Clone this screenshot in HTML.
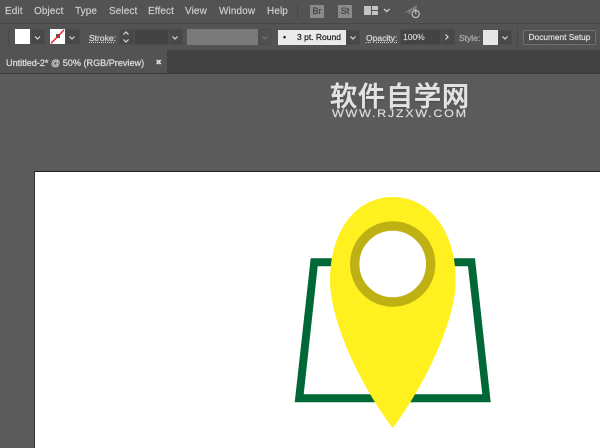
<!DOCTYPE html>
<html>
<head>
<meta charset="utf-8">
<style>
html,body{margin:0;padding:0;background:#5b5b5b;}
#p{position:relative;width:600px;height:448px;overflow:hidden;background:#5b5b5b;font-family:"Liberation Sans",sans-serif;}
#p div,#p span{position:absolute;}
.m{top:6px;font-size:10px;line-height:12px;color:#d0d0d0;white-space:nowrap;letter-spacing:.1px;-webkit-text-stroke:.15px #d0d0d0;}
.l{font-size:8.5px;line-height:10px;white-space:nowrap;color:#d4d4d4;-webkit-text-stroke:.3px currentColor;}
.box{background:#484848;border:1px solid #4c4c4c;box-sizing:border-box;}
svg{position:absolute;overflow:visible;}
</style>
</head>
<body>
<div id="p">
  <div style="left:0;top:0;width:600px;height:24px;background:#535353;"></div>
  <div style="left:0;top:23px;width:600px;height:1px;background:#474747;"></div>
  <div style="left:0;top:24px;width:600px;height:26px;background:#535353;"></div>
  <div style="left:0;top:50px;width:600px;height:24px;background:#424242;"></div>
  <div style="left:0;top:50px;width:167px;height:24px;background:#535353;"></div>
  <div style="left:0;top:73px;width:600px;height:1px;background:#3a3a3a;"></div>

  <span class="m" style="left:5px;">Edit</span>
  <span class="m" style="left:34px;">Object</span>
  <span class="m" style="left:75px;">Type</span>
  <span class="m" style="left:109px;">Select</span>
  <span class="m" style="left:148px;">Effect</span>
  <span class="m" style="left:185px;">View</span>
  <span class="m" style="left:219px;">Window</span>
  <span class="m" style="left:267px;">Help</span>
  <div style="left:297px;top:4px;width:1px;height:15px;background:#484848;"></div>

  <div style="left:310px;top:5px;width:14px;height:13px;background:#8a8a8a;color:#454545;font-size:9px;-webkit-text-stroke:.3px #454545;line-height:13px;text-align:center;">Br</div>
  <div style="left:338px;top:5px;width:14px;height:13px;background:#8a8a8a;color:#454545;font-size:9px;-webkit-text-stroke:.3px #454545;line-height:13px;text-align:center;">St</div>
  <svg style="left:0;top:0;" width="600" height="24">
    <path d="M364 6h7v9h-7zM372 6h6v4h-6zM372 11h6v4h-6z" fill="#c4c4c4" stroke="none"/>
    <path d="M384 9l2.800 2.500L389.600 9" fill="none" stroke="#d0d0d0" stroke-width="1.300"/>
    <path d="M403.500 13L417 5L416 11L412 10L409 15L408.500 12Z" fill="#808080"/>
    <circle cx="415.700" cy="14" r="3.600" fill="#535353" stroke="#bdbdbd" stroke-width="1.200"/>
    <path d="M415.700 9.500v4.500" stroke="#bdbdbd" stroke-width="1.200"/>
  </svg>

  <!-- control bar -->
  <div style="left:15px;top:29px;width:15px;height:15px;background:#fff;"></div>
  <div class="box" style="left:31px;top:29px;width:14px;height:15px;"></div>
  <div style="left:50px;top:29px;width:15px;height:15px;background:#fff;"></div>
  <div class="box" style="left:65px;top:29px;width:15px;height:15px;"></div>
  <div class="l" style="left:89px;top:33px;color:#d0d0d0;text-decoration:underline dotted;">Stroke:</div>
  <div class="box" style="left:119px;top:29px;width:15px;height:16px;"></div>
  <div class="box" style="left:134px;top:29px;width:35px;height:16px;background:#434343;"></div>
  <div class="box" style="left:169px;top:29px;width:14px;height:16px;"></div>
  <div style="left:187px;top:29px;width:71px;height:16px;background:#7a7a7a;"></div>
  <div class="box" style="left:258px;top:29px;width:14px;height:16px;background:#505050;"></div>
  <div style="left:278px;top:30px;width:68px;height:15px;background:#ebebeb;"></div>
  <span style="left:283px;top:32px;font-size:9px;line-height:10px;color:#1c1c1c;font-weight:bold;">•</span>
  <span style="left:297px;top:32px;font-size:8.5px;line-height:11px;color:#1c1c1c;white-space:nowrap;-webkit-text-stroke:.25px #1c1c1c;">3 pt. Round</span>
  <div class="box" style="left:346px;top:30px;width:14px;height:15px;"></div>
  <div class="l" style="left:366px;top:33px;text-decoration:underline dotted;">Opacity:</div>
  <div class="box" style="left:400px;top:29px;width:41px;height:16px;background:#434343;"></div>
  <span style="left:403px;top:32px;font-size:8.5px;line-height:11px;color:#d8d8d8;-webkit-text-stroke:.15px #d8d8d8;">100%</span>
  <div class="box" style="left:441px;top:29px;width:14px;height:16px;"></div>
  <div class="l" style="left:459px;top:33px;color:#a8a8a8;">Style:</div>
  <div style="left:483px;top:30px;width:15px;height:15px;background:#e6e6e6;"></div>
  <div class="box" style="left:498px;top:30px;width:14px;height:15px;"></div>
  <div style="left:517px;top:28px;width:1px;height:18px;background:#484848;"></div>
  <div style="left:523px;top:30px;width:73px;height:15px;box-sizing:border-box;border:1px solid #707070;border-radius:2px;background:#4e4e4e;color:#dedede;font-size:8.3px;-webkit-text-stroke:.25px #dedede;line-height:13px;text-align:center;white-space:nowrap;">Document Setup</div>
  <div style="left:8px;top:28px;width:1px;height:18px;background:#484848;"></div>

  <svg style="left:0;top:24px;" width="600" height="26">
    <g fill="none" stroke="#d8d8d8" stroke-width="1.200">
      <path d="M35 12.500l2.500 2.500 2.500-2.500"/>
      <path d="M69.500 12.500l2.500 2.500 2.500-2.500"/>
      <path d="M123.500 10.500l2.500-2.500 2.500 2.500M123.500 15.500l2.500 2.500 2.500-2.500"/>
      <path d="M172.500 12.500l2.500 2.500 2.500-2.500"/>
      <path d="M350.500 12.500l2.500 2.500 2.500-2.500"/>
      <path d="M445.500 10.500l2.500 2.500-2.500 2.500"/>
      <path d="M502.500 12.500l2.500 2.500 2.500-2.500"/>
    </g>
    <path d="M262.500 12.500l2.500 2.500 2.500-2.500" fill="none" stroke="#6f6f6f" stroke-width="1.200"/>
    <rect x="56" y="10" width="4" height="4" fill="#555"/>
    <path d="M51 19.500L64 6" stroke="#ee1c25" stroke-width="1.400"/>
  </svg>

  <!-- tab -->
  <span style="left:6px;top:57px;font-size:9.1px;line-height:12px;color:#d8d8d8;-webkit-text-stroke:.3px #d8d8d8;white-space:nowrap;">Untitled-2* @ 50% (RGB/Preview)</span>
  <svg style="left:0;top:50px;" width="200" height="24">
    <path d="M156.700 60l0 0" stroke="none"/>
    <path d="M156.700 10l4 4M160.700 10l-4 4" stroke="#e0e0e0" stroke-width="1.700"/>
  </svg>

  <!-- watermark -->
  <div style="left:330px;top:82px;width:140px;font-size:27px;line-height:30px;color:#e2e2e2;white-space:nowrap;font-family:'Liberation Sans','Noto Sans CJK SC',sans-serif;-webkit-text-stroke:1px #e2e2e2;text-shadow:0 1px 2px #444;letter-spacing:1px;">软件自学网</div>
  <div style="left:332px;top:108px;font-size:11px;line-height:13px;color:#dcdcdc;white-space:nowrap;letter-spacing:1.5px;transform:scaleX(1.14);transform-origin:0 0;-webkit-text-stroke:.2px #dcdcdc;">WWW.RJZXW.COM</div>

  <!-- artboard -->
  <div style="left:34px;top:171px;width:566px;height:277px;background:#333;"></div>
  <div style="left:34px;top:171px;width:566px;height:1px;background:#222;"></div>
  <div style="left:35px;top:172px;width:565px;height:276px;background:#fff;"></div>

  <svg style="left:0;top:0;" width="600" height="448">
    <path fill-rule="evenodd" fill="#006837" d="M310.700 258.300H475L490.700 402.300H294.700ZM317.700 266.300L303.700 394.300H482.300L468 266.300Z"/>
    <path fill="#fff01f" d="M392.700 197C355 197 330 232 330 280C330 325 365 392 392.700 428C420 392 455.700 325 455.700 280C455.700 232 430 197 392.700 197Z"/>
    <circle cx="392.700" cy="264" r="38" fill="#fff" stroke="#bfb014" stroke-width="9.400"/>
  </svg>
</div>
</body>
</html>
